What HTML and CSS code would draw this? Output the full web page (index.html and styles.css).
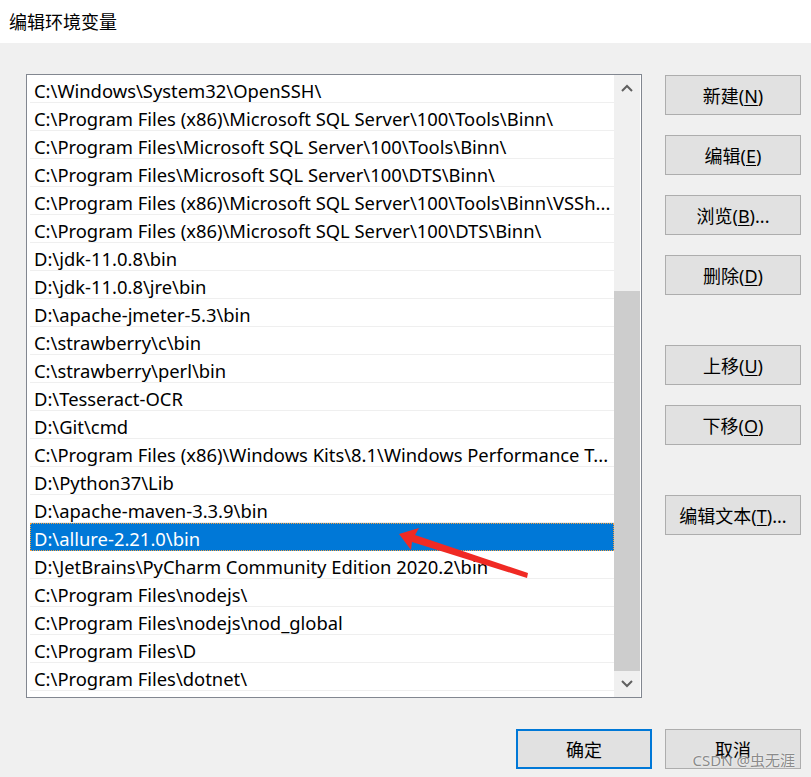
FILE: index.html
```html
<!DOCTYPE html>
<html lang="zh-CN">
<head>
<meta charset="utf-8">
<title>编辑环境变量</title>
<link rel="stylesheet" href="styles.css">
</head>
<body>
<div class="dialog">
  <div class="titlebar">编辑环境变量</div>
  <div class="content">
    <div class="main">
      <div class="listbox">
        <div class="items">
          <div class="item">C:\Windows\System32\OpenSSH\</div>
          <div class="item">C:\Program Files (x86)\Microsoft SQL Server\100\Tools\Binn\</div>
          <div class="item">C:\Program Files\Microsoft SQL Server\100\Tools\Binn\</div>
          <div class="item">C:\Program Files\Microsoft SQL Server\100\DTS\Binn\</div>
          <div class="item">C:\Program Files (x86)\Microsoft SQL Server\100\Tools\Binn\VSSh...</div>
          <div class="item">C:\Program Files (x86)\Microsoft SQL Server\100\DTS\Binn\</div>
          <div class="item">D:\jdk-11.0.8\bin</div>
          <div class="item">D:\jdk-11.0.8\jre\bin</div>
          <div class="item">D:\apache-jmeter-5.3\bin</div>
          <div class="item">C:\strawberry\c\bin</div>
          <div class="item">C:\strawberry\perl\bin</div>
          <div class="item">D:\Tesseract-OCR</div>
          <div class="item">D:\Git\cmd</div>
          <div class="item">C:\Program Files (x86)\Windows Kits\8.1\Windows Performance T...</div>
          <div class="item">D:\Python37\Lib</div>
          <div class="item">D:\apache-maven-3.3.9\bin</div>
          <div class="item selected">D:\allure-2.21.0\bin</div>
          <div class="item">D:\JetBrains\PyCharm Community Edition 2020.2\bin</div>
          <div class="item">C:\Program Files\nodejs\</div>
          <div class="item">C:\Program Files\nodejs\nod_global</div>
          <div class="item">C:\Program Files\D</div>
          <div class="item">C:\Program Files\dotnet\</div>
        </div>
        <div class="scrollbar">
          <div class="sb-arrow">
            <svg width="12" height="8" viewBox="0 0 12 8"><path d="M1 7 L6 2 L11 7" fill="none" stroke="#606060" stroke-width="2"/></svg>
          </div>
          <div class="sb-track"><div class="sb-thumb"></div></div>
          <div class="sb-arrow">
            <svg width="12" height="8" viewBox="0 0 12 8"><path d="M1 1 L6 6 L11 1" fill="none" stroke="#606060" stroke-width="2"/></svg>
          </div>
        </div>
      </div>
      <div class="side">
        <div class="group">
          <button class="btn">新建(<u>N</u>)</button>
          <button class="btn">编辑(<u>E</u>)</button>
          <button class="btn">浏览(<u>B</u>)...</button>
          <button class="btn">删除(<u>D</u>)</button>
        </div>
        <div class="group">
          <button class="btn">上移(<u>U</u>)</button>
          <button class="btn">下移(<u>O</u>)</button>
        </div>
        <div class="group">
          <button class="btn">编辑文本(<u>T</u>)...</button>
        </div>
      </div>
    </div>
    <div class="footer">
      <button class="btn default">确定</button>
      <button class="btn">取消</button>
      <span class="watermark">CSDN @虫无涯</span>
    </div>
  </div>
  <svg class="arrow" width="811" height="777" viewBox="0 0 811 777">
    <polygon points="399,534 419,528 415,535 528,573 527,578 412,542 411,550" fill="#f02a24"/>
  </svg>
</div>
</body>
</html>
```
FILE: styles.css
```css
* { box-sizing: border-box; }
html, body {
  margin: 0;
  padding: 0;
  background: #f0f0f0;
}
body {
  font-family: "Noto Sans", "Noto Sans CJK SC", sans-serif;
  color: #000;
}
.dialog {
  position: relative;
  width: 811px;
  height: 777px;
  overflow: hidden;
}
.titlebar {
  height: 43px;
  background: #fff;
  font-size: 18px;
  line-height: 42px;
  padding-left: 9px;
  font-family: "Noto Sans CJK SC", sans-serif;
}
.content {
  padding: 31px 10px 0 26px;
}
.main {
  display: flex;
  gap: 23px;
}
.listbox {
  width: 616px;
  height: 624px;
  border: 1px solid #828790;
  background: #fff;
  display: flex;
}
.items {
  flex: 1;
  padding-left: 3px;
  overflow: hidden;
}
.item {
  height: 28px;
  display: flex;
  align-items: center;
  padding-top: 3px;
  border-bottom: 1px solid #efefef;
  padding-left: 4px;
  font-size: 18.4px;
  white-space: nowrap;
  overflow: hidden;
}
.item.selected {
  background: #0078d7;
  color: #fff;
  border-bottom-color: #0078d7;
  outline: 1px dotted #f5a040;
  outline-offset: -1px;
}
.scrollbar {
  width: 26px;
  background: #f0f0f0;
  display: flex;
  flex-direction: column;
  margin-right: 1px;
}
.sb-arrow {
  height: 26px;
  display: flex;
  align-items: center;
  justify-content: center;
}
.sb-track {
  flex: 1;
  padding-top: 190px;
  display: flex;
  flex-direction: column;
}
.sb-thumb {
  flex: 1;
  background: #cdcdcd;
}
.side {
  width: 136px;
  display: flex;
  flex-direction: column;
  gap: 50px;
  padding-top: 1px;
}
.group {
  display: flex;
  flex-direction: column;
  gap: 20px;
}
.btn {
  width: 136px;
  height: 40px;
  background: #e1e1e1;
  border: 1px solid #adadad;
  font-family: "Noto Sans", "Noto Sans CJK SC", sans-serif;
  font-size: 18px;
  color: #000;
  padding: 0;
  margin: 0;
}
.btn u {
  text-underline-offset: 2px;
}
.btn.default {
  border: 2px solid #0078d7;
}
.footer {
  position: relative;
  display: flex;
  justify-content: flex-end;
  gap: 13px;
  margin-top: 31px;
}
.watermark {
  position: absolute;
  right: 6px;
  top: 20px;
  font-family: "Noto Sans", "Noto Sans CJK SC", sans-serif;
  font-size: 15px;
  color: rgba(110, 110, 110, 0.8);
  text-shadow: 0 0 2px #fff;
}
.arrow {
  position: absolute;
  left: 0;
  top: 0;
  pointer-events: none;
}
```
